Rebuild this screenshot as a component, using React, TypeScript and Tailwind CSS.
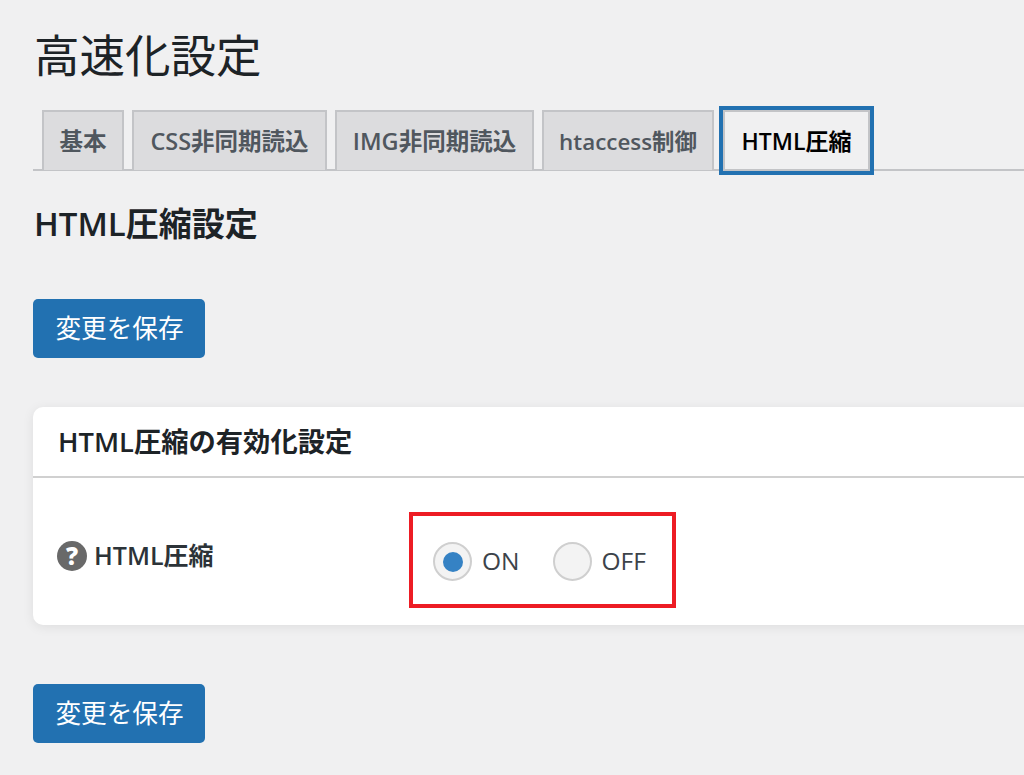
const FONT = "font-['Open_Sans','Noto_Sans_CJK_JP',sans-serif]";

const tabs = [
  { label: '基本', width: 'w-[82px]', text: 'text-[23.5px]' },
  { label: 'CSS非同期読込', width: 'w-[195px]', text: 'text-[23.5px]' },
  { label: 'IMG非同期読込', width: 'w-[199px]', text: 'text-[23.5px]' },
  { label: 'htaccess制御', width: 'w-[172px]', text: 'text-[22.4px]' },
];

const SaveButton = () => (
  <button className="flex h-[59px] w-[172px] items-center justify-center rounded-[5px] bg-[#2271b1] pl-[1px] pt-[2px] text-[25.6px] text-white">
    変更を保存
  </button>
);

const HelpIcon = () => (
  <span className="flex h-[30px] w-[30px] items-center justify-center rounded-full bg-[#696969] text-[24px] font-extrabold leading-none text-white">
    ?
  </span>
);

const Radio = ({ label, checked }: { label: string; checked?: boolean }) => (
  <label className="flex items-center gap-[10px]">
    <span className="flex h-[39px] w-[39px] items-center justify-center rounded-full border-2 border-[#cfcfcf] bg-[#f3f3f3]">
      {checked && <span className="h-[20px] w-[20px] rounded-full bg-[#3582c4]" />}
    </span>
    <span className="text-[24.5px] text-[#3c434a]">{label}</span>
  </label>
);

export default function App() {
  return (
    <div className={`${FONT} h-[775px] w-[1024px] overflow-hidden bg-[#f0f0f1] pl-[33px] text-[#1d2327]`}>
      <h1 className="pl-[1px] pt-[25px] text-[45.5px] font-normal leading-[60px]">高速化設定</h1>

      <div className="mt-[25px] flex h-[61px] border-b-2 border-[#c3c4c7] pl-[9px]">
        {tabs.map((tab) => (
          <div
            key={tab.label}
            className={`${tab.width} ${tab.text} mr-[8px] flex h-[60px] items-center justify-center border-2 border-b-0 border-[#c3c4c7] bg-[#dcdcde] pt-[2px] font-semibold text-[#50575e]`}
          >
            {tab.label}
          </div>
        ))}
        <div className="relative ml-[1px] flex h-[61px] w-[147px] items-center justify-center border-2 border-[#c3c4c7] bg-[#f0f0f1] pt-[2px] text-[23px] font-semibold text-black outline-[4px] outline-[#2271b1]">
          HTML圧縮
        </div>
      </div>

      <h2 className="mt-[31px] pl-[1px] text-[33px] font-semibold leading-[44px]">HTML圧縮設定</h2>

      <div className="mt-[53px]">
        <SaveButton />
      </div>

      <div className="mt-[49px] h-[218px] w-[1010px] rounded-[10px] bg-white shadow-[0_2px_12px_rgba(0,0,0,0.08)]">
        <div className="flex h-[71px] items-center border-b-2 border-[#d0d0d0] pl-[25px] pt-[2px] text-[27.3px] font-semibold">
          HTML圧縮の有効化設定
        </div>
        <div className="flex items-start pl-[24px]">
          <div className="mt-[59px] flex w-[352px] items-center gap-[7px] text-[25px] font-semibold text-[#2c3338]">
            <HelpIcon />
            HTML圧縮
          </div>
          <div className="mt-[34px] flex h-[96px] w-[267px] items-center gap-[33px] border-[4px] border-[#ed1c24] pl-[20px] pt-[3px]">
            <Radio label="ON" checked />
            <Radio label="OFF" />
          </div>
        </div>
      </div>

      <div className="mt-[59px]">
        <SaveButton />
      </div>
    </div>
  );
}
